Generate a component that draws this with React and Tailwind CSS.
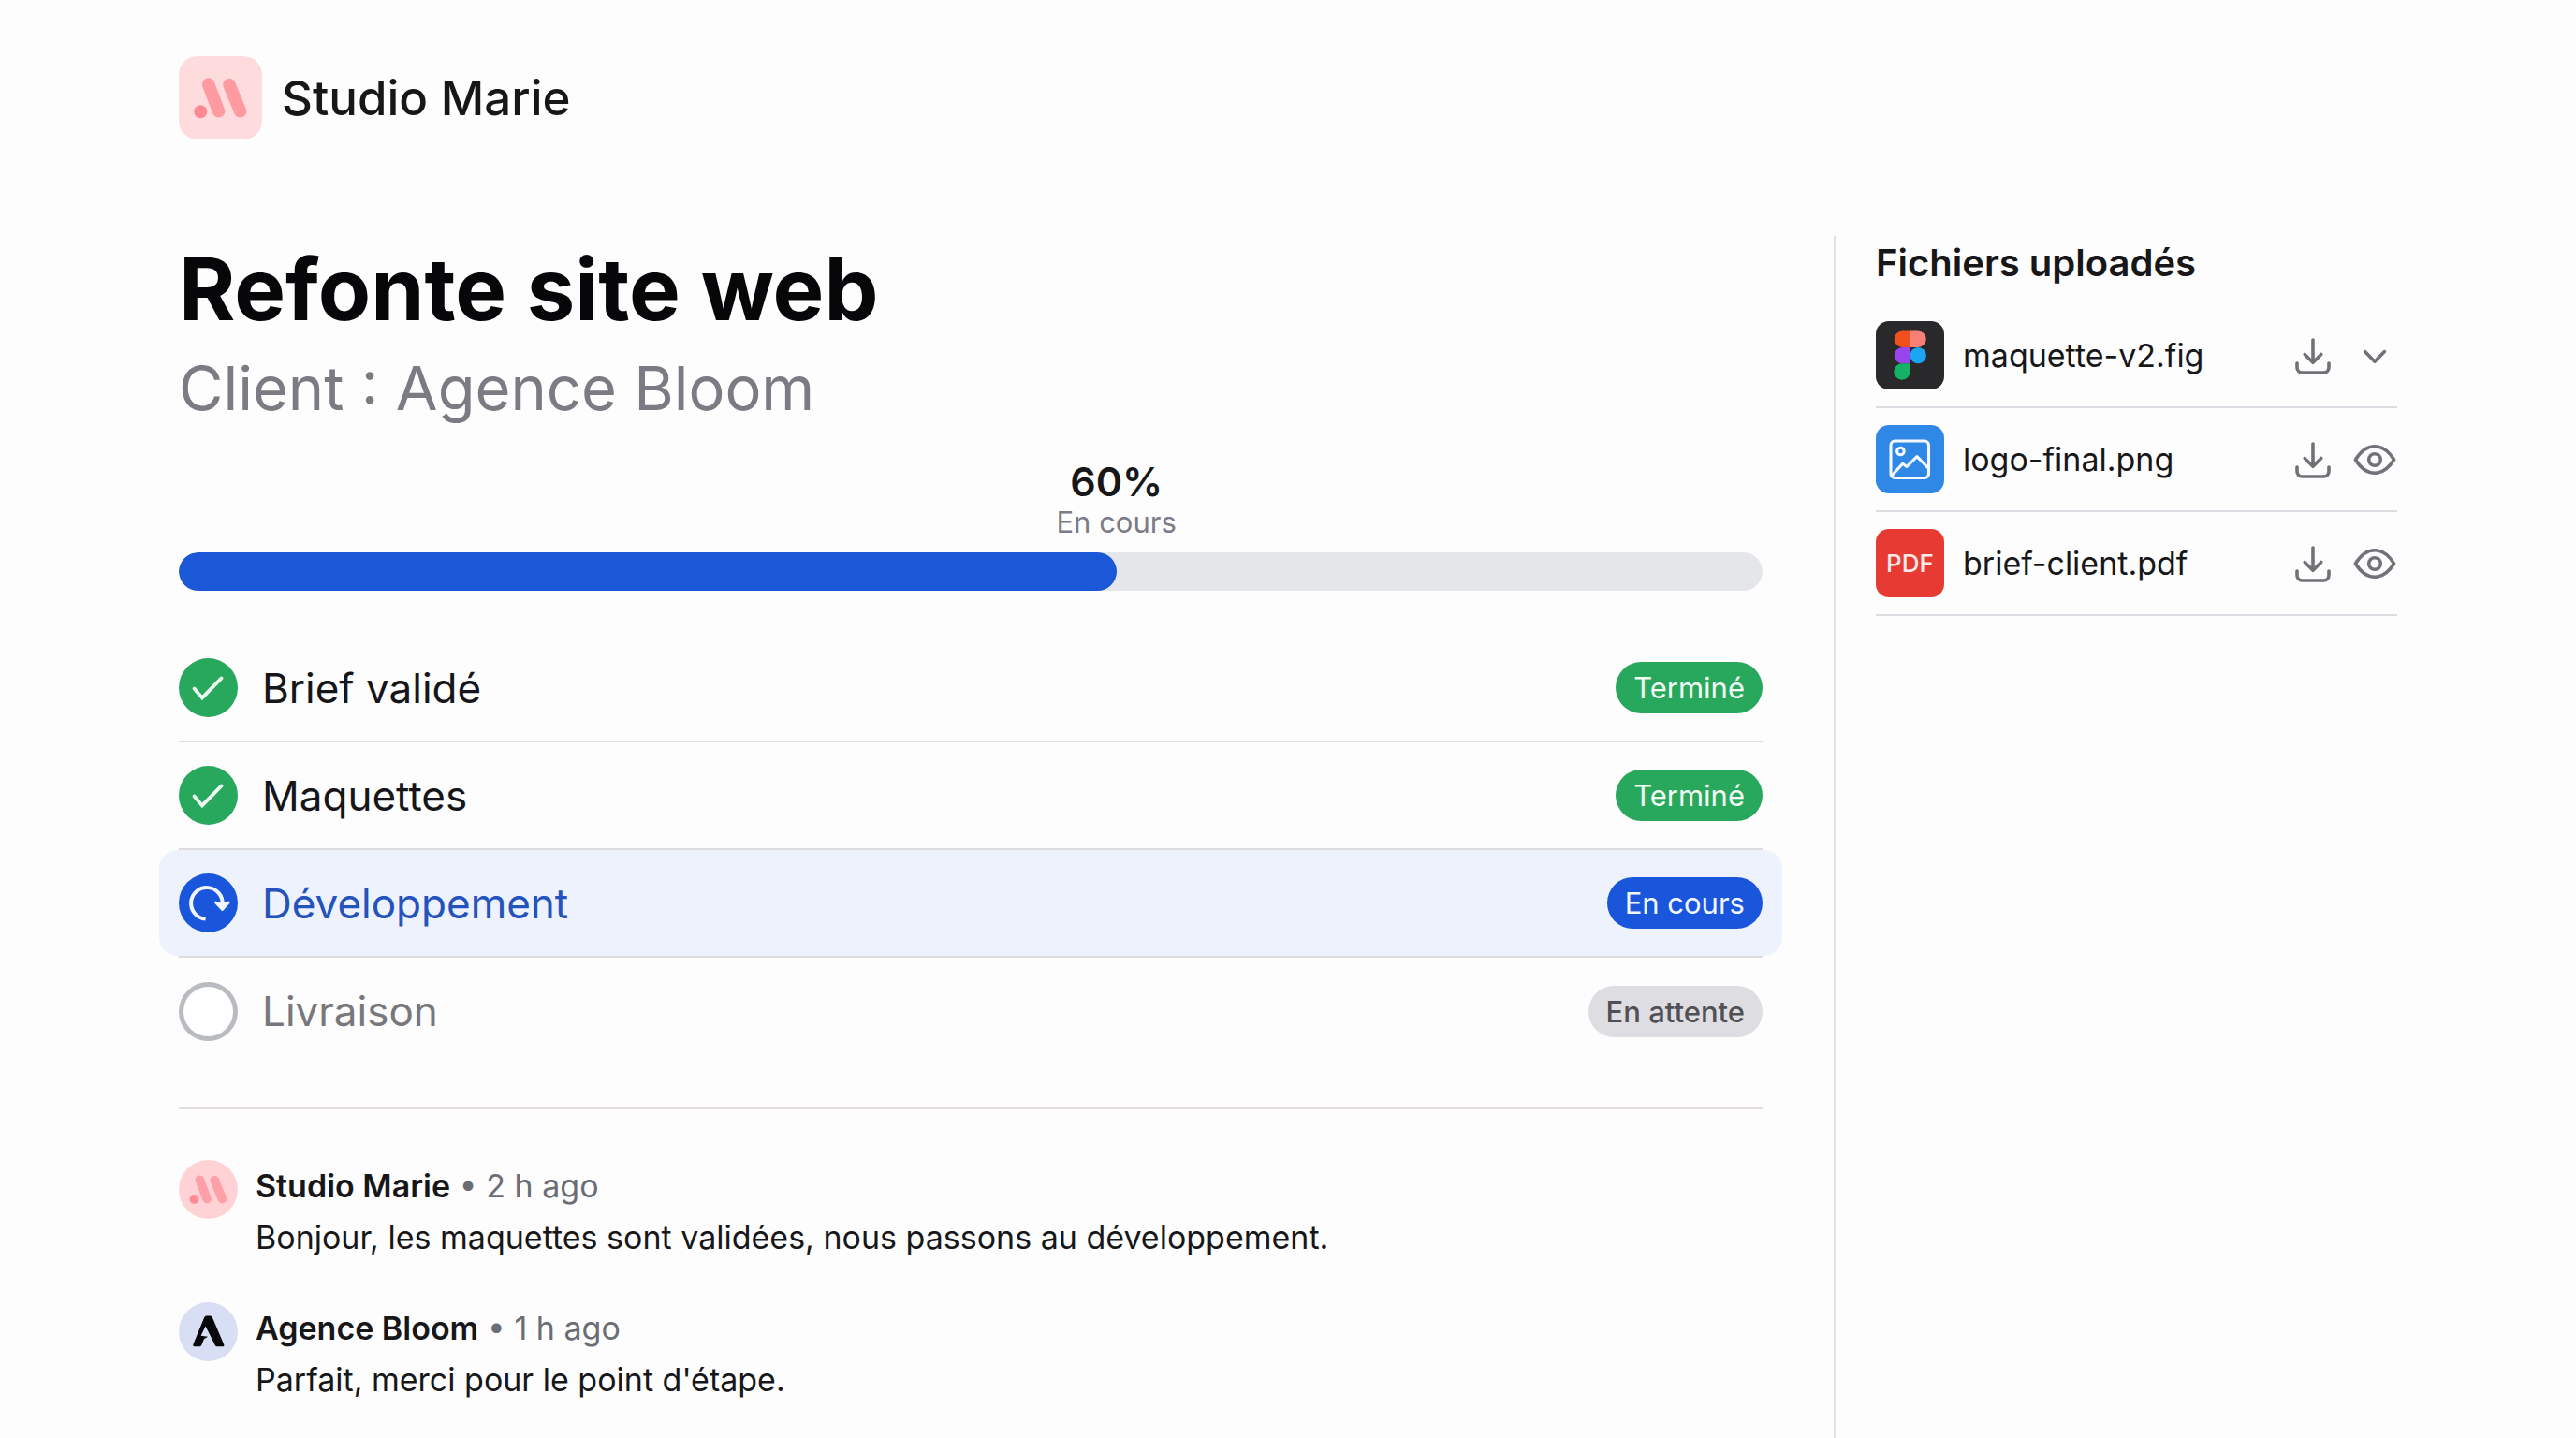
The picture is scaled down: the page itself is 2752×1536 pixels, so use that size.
const steps = [
  { name: "Brief validé", state: "done" },
  { name: "Maquettes", state: "done" },
  { name: "Développement", state: "active" },
  { name: "Livraison", state: "pending" },
];

const comments = [
  {
    author: "Studio Marie",
    time: "2 h ago",
    text: "Bonjour, les maquettes sont validées, nous passons au développement.",
    avatar: "marie",
  },
  {
    author: "Agence Bloom",
    time: "1 h ago",
    text: "Parfait, merci pour le point d'étape.",
    avatar: "bloom",
  },
];

const files = [
  { name: "maquette-v2.fig", kind: "fig", action: "expand" },
  { name: "logo-final.png", kind: "png", action: "preview" },
  { name: "brief-client.pdf", kind: "pdf", action: "preview" },
];

function MarieMark({ className }) {
  return (
    <svg viewBox="0 0 89 89" className={className} aria-hidden="true">
      <g stroke="currentColor" strokeWidth="13.5" strokeLinecap="round">
        <path d="M31.6 30 42.6 58.8" />
        <path d="M54 30.6 65.6 58.8" />
      </g>
      <circle cx="23.3" cy="59.2" r="7" fill="#ff8a94" />
    </svg>
  );
}

function BloomMark() {
  return (
    <svg viewBox="0 0 64 64" className="size-full" aria-hidden="true">
      <path
        d="M15.5 46 27.6 16.6Q28.4 14.8 30.2 14.8H34Q35.8 14.8 36.5 16.6L48.9 45.6Q49.8 48 47.5 48H41.5Q40 48 39.3 46.4L29 25.8 24 36.2 31.6 37.4 27.4 39.8 24.7 46.4Q24 48 22.5 48H17Q15 48 15.5 46Z"
        fill="#08080c"
      />
    </svg>
  );
}

function StepIcon({ state }) {
  if (state === "pending") {
    return <span className="size-[63px] shrink-0 rounded-full border-[5px] border-[#b8bbbf] bg-white" />;
  }
  if (state === "active") {
    return (
      <svg viewBox="0 0 63 63" fill="none" className="size-[63px] shrink-0" aria-hidden="true">
        <circle cx="31.5" cy="31.5" r="31.5" fill="#1a56db" />
        <path d="M28.6 48.6A16.8 16.8 0 1 1 46.6 33.5" stroke="#f1f5ff" strokeWidth="4" />
        <path
          d="M39.5 31 46.6 33.4 53.2 31 46.5 38.6Z"
          fill="#f1f5ff"
          stroke="#f1f5ff"
          strokeWidth="2.8"
          strokeLinejoin="round"
        />
      </svg>
    );
  }
  return (
    <svg viewBox="0 0 63 63" fill="none" className="size-[63px] shrink-0" aria-hidden="true">
      <circle cx="31.5" cy="31.5" r="31.5" fill="#27a85c" />
      <path
        d="M16.5 32.4 25 42.4 45.6 21.4"
        stroke="#ecfbf1"
        strokeWidth="3.8"
        strokeLinecap="round"
        strokeLinejoin="miter"
      />
    </svg>
  );
}

function Badge({ state }) {
  const base = "flex h-[55px] items-center rounded-full px-[19px] text-[31px] leading-[55px]";
  if (state === "done") return <span className={`${base} bg-[#27a85c] text-[#f1fbf4]`}>Terminé</span>;
  if (state === "active") return <span className={`${base} bg-[#1a56db] text-[#f1f5ff]`}>En cours</span>;
  return <span className={`${base} bg-[#dddde2] font-medium text-[#505055]`}>En attente</span>;
}

const stepText = {
  done: "text-[#16161a]",
  active: "text-[#2453bd]",
  pending: "text-[#77777c]",
};

function Step({ step, last }) {
  const active = step.state === "active";
  return (
    <li className={last ? "h-[114px]" : "h-[115px] border-b-2 border-[#dddce1]"}>
      <div
        className={
          active
            ? "-mx-[21px] flex h-full items-center gap-[26px] rounded-[20px] bg-[#eef2fd] px-[21px]"
            : "flex h-full items-center gap-[26px]"
        }
      >
        <StepIcon state={step.state} />
        <span className={`flex-1 text-[44px] leading-[56px] ${stepText[step.state]}`}>{step.name}</span>
        <Badge state={step.state} />
      </div>
    </li>
  );
}

function FileIcon({ kind }) {
  if (kind === "fig") {
    return (
      <svg viewBox="0 0 73 73" className="size-[73px] shrink-0" aria-hidden="true">
        <rect width="73" height="73" rx="14" fill="#29292b" />
        <path d="M36.7 10.5H28.4a8.7 8.7 0 0 0 0 17.4h8.3Z" fill="#f0501c" />
        <path d="M36.7 10.5H45a8.7 8.7 0 0 1 0 17.4h-8.3Z" fill="#f77f76" />
        <path d="M36.7 27.9H28.4a8.7 8.7 0 0 0 0 17.4h8.3Z" fill="#9845ee" />
        <circle cx="45.2" cy="36.6" r="8.7" fill="#1ba4f2" />
        <path d="M36.7 45.3H28.4a8.7 8.7 0 1 0 8.3 8.7Z" fill="#15b265" />
      </svg>
    );
  }
  if (kind === "png") {
    return (
      <svg viewBox="0 0 73 73" fill="none" className="size-[73px] shrink-0" aria-hidden="true">
        <rect width="73" height="73" rx="14" fill="#2f88e6" />
        <g stroke="#f4f9ff" strokeWidth="3.1" strokeLinecap="round" strokeLinejoin="round">
          <rect x="16" y="17" width="40.5" height="39.5" rx="4.5" />
          <circle cx="26.4" cy="28" r="3.8" />
          <path d="M17.5 53.5 28.7 41.2 33 44.4 44 33.6 56 46" />
        </g>
      </svg>
    );
  }
  return (
    <span className="flex size-[73px] shrink-0 items-center justify-center rounded-[14px] bg-[#e63a32] text-[26px] leading-8 font-medium text-[#ffe9e7]">
      PDF
    </span>
  );
}

function ActionIcon({ children }) {
  return (
    <svg
      viewBox="0 0 48 48"
      fill="none"
      stroke="currentColor"
      strokeWidth="3.6"
      strokeLinecap="round"
      strokeLinejoin="round"
      className="size-12"
      aria-hidden="true"
    >
      {children}
    </svg>
  );
}

function FileRow({ file }) {
  return (
    <li className="flex h-[111px] items-center gap-5 border-b-2 border-[#dfdde3]">
      <FileIcon kind={file.kind} />
      <span className="flex-1 text-[34px] leading-[54px] text-[#17171a]">{file.name}</span>
      <div className="flex gap-[18px] text-[#717178]">
        <button type="button" aria-label={`Télécharger ${file.name}`}>
          <ActionIcon>
            <path d="M24 7v24" />
            <path d="M15.2 22.4 24 31.2l8.8-8.8" />
            <path d="M7 32v4.5a5.5 5.5 0 0 0 5.5 5.5h23a5.5 5.5 0 0 0 5.5-5.5V32" />
          </ActionIcon>
        </button>
        {file.action === "expand" ? (
          <button type="button" aria-label={`Détails de ${file.name}`}>
            <ActionIcon>
              <path d="M13.6 19.6 24 30.2l10.4-10.6" />
            </ActionIcon>
          </button>
        ) : (
          <button type="button" aria-label={`Aperçu de ${file.name}`}>
            <ActionIcon>
              <path d="M3.4 24C9 15 16 9.8 24 9.8S39 15 44.6 24C39 33 32 38.2 24 38.2S9 33 3.4 24Z" />
              <circle cx="24" cy="24" r="6.3" />
            </ActionIcon>
          </button>
        )}
      </div>
    </li>
  );
}

function Comment({ comment }) {
  return (
    <li className="flex gap-[19px]">
      {comment.avatar === "marie" ? (
        <span className="size-[63px] shrink-0 overflow-hidden rounded-full bg-[#ffd3d6]">
          <MarieMark className="size-full text-[#ff9fa8]" />
        </span>
      ) : (
        <span className="size-[63px] shrink-0 overflow-hidden rounded-full bg-[#d8dff5]">
          <BloomMark />
        </span>
      )}
      <div className="text-[34px] leading-[55px] text-[#17171a]">
        <p>
          <strong className="font-semibold">{comment.author}</strong>{" "}
          <span className="text-[#6b6d74]">• {comment.time}</span>
        </p>
        <p>{comment.text}</p>
      </div>
    </li>
  );
}

export default function App() {
  return (
    <div className="flex min-h-screen flex-col bg-[#fdfdfd] px-[191px] pt-[60px] font-[Inter,sans-serif] text-[#17171a]">
      <header className="flex items-center gap-[21px]">
        <span className="size-[89px] rounded-[20px] bg-[#fedcde]">
          <MarieMark className="size-full text-[#ff9aa1]" />
        </span>
        <span className="text-[51px] leading-[64px] font-medium">Studio Marie</span>
      </header>

      <div className="mt-[103px] flex flex-1">
        <main className="mr-[76px] min-w-0 flex-1 pb-8">
          <h1 className="text-[92px] leading-[114px] font-bold text-[#07070a]">Refonte site web</h1>
          <p className="mt-[9px] text-[65px] leading-[80px] text-[#7b7c83]">Client : Agence Bloom</p>

          <section className="mt-[33px]" aria-label="Avancement">
            <div className="flex w-[59.2%] justify-end">
              <div className="flex w-0 flex-col items-center whitespace-nowrap">
                <span className="text-[43px] leading-[52px] font-semibold">60%</span>
                <span className="text-[31px] leading-9 text-[#7b7b85]">En cours</span>
              </div>
            </div>
            <div
              role="progressbar"
              aria-label="Avancement du projet"
              aria-valuenow={60}
              aria-valuemin={0}
              aria-valuemax={100}
              className="mt-[14px] h-[41px] overflow-hidden rounded-full bg-[#e5e6ea]"
            >
              <div className="h-full w-[59.2%] rounded-full bg-[#1a58d8]" />
            </div>
          </section>

          <ol className="mt-[47px]">
            {steps.map((step, i) => (
              <Step key={step.name} step={step} last={i === steps.length - 1} />
            ))}
          </ol>

          <ul className="mt-[45px] flex flex-col gap-[42px] border-t-[3px] border-[#e2dce1] pt-[54px]">
            {comments.map((comment) => (
              <Comment key={comment.author} comment={comment} />
            ))}
          </ul>
        </main>

        <aside className="w-[602px] shrink-0 border-l-2 border-[#e2dfe6] pl-[43px]">
          <h2 className="text-[40px] leading-[58px] font-semibold">Fichiers uploadés</h2>
          <ul className="mt-[15px]">
            {files.map((file) => (
              <FileRow key={file.name} file={file} />
            ))}
          </ul>
        </aside>
      </div>
    </div>
  );
}
